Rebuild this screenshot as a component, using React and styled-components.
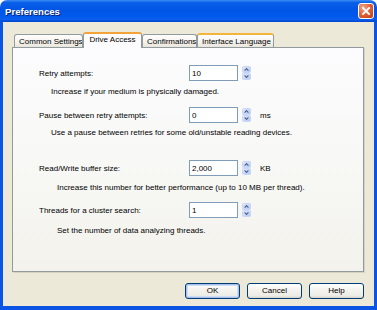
import React from 'react';
import styled, { createGlobalStyle, css } from 'styled-components';

const GlobalStyle = createGlobalStyle`
  html, body { margin: 0; padding: 0; background: #fff; }
  * { box-sizing: border-box; }
`;

const Window = styled.div`
  width: 377px;
  height: 310px;
  display: flex;
  flex-direction: column;
  font-family: "Liberation Sans", Arial, sans-serif;
  font-size: 8px;
  line-height: 12px;
  color: #000;
`;

const TitleBar = styled.div`
  height: 22px;
  flex: none;
  display: flex;
  align-items: center;
  justify-content: space-between;
  padding: 0 3px 0 5px;
  border-radius: 7px 7px 0 0;
  background: linear-gradient(180deg, #3b8cf5 0%, #0a5fe8 12%, #0055e5 45%, #0259ec 75%, #0b5fef 88%, #0044cc 100%);
`;

const Title = styled.div`
  padding-top: 2px;
  color: #fff;
  font-weight: bold;
  font-size: 9.6px;
  text-shadow: 1px 1px 0 #0a1f6e;
`;

const CloseButton = styled.div`
  width: 16px;
  height: 16px;
  border: 1px solid #fff;
  border-radius: 3px;
  display: flex;
  align-items: center;
  justify-content: center;
  background: radial-gradient(circle at 30% 25%, #f0a78a 0%, #e2643c 45%, #c13b15 100%);
`;

const Frame = styled.div`
  flex: 1;
  display: flex;
  flex-direction: column;
  background: #ece9d8;
  border-style: solid;
  border-color: #0a55e3;
  border-width: 0 3px 4px 3px;
  padding: 10px 10px 7px 9px;
`;

const TabStrip = styled.div`
  height: 15px;
  display: flex;
  align-items: flex-end;
  padding-left: 2px;
  position: relative;
  z-index: 1;
`;

const Tab = styled.div`
  width: ${p => p.$width}px;
  height: 13px;
  padding: 1px 4px 0;
  text-align: center;
  white-space: nowrap;
  overflow: hidden;
  line-height: 11px;
  border: 1px solid #919b9c;
  border-bottom: none;
  border-radius: 3px 3px 0 0;
  background: linear-gradient(180deg, #fefefe 0%, #f4f3ee 60%, #e8e6dc 100%);
  ${p => p.$hot && css`
    height: 14px;
    border-top: 2px solid #f5b53c;
    box-shadow: inset 0 0 0 0 transparent;
  `}
  ${p => p.$active && css`
    height: 16px;
    margin-bottom: -1px;
    padding-top: 0;
    border-top: 2px solid #f2a33a;
    background: #fcfcfe;
  `}
`;

const Panel = styled.div`
  height: 225px;
  border: 1px solid #919b9c;
  box-shadow: 1px 1px 0 #d6d3c6;
  background: linear-gradient(180deg, #fcfcfe 0%, #f7f7f4 60%, #f3f2ec 100%);
  padding: 17px 0 0 26px;
  display: flex;
  flex-direction: column;
`;

const Setting = styled.div`
  margin-top: ${p => p.$top}px;
  display: flex;
  flex-direction: column;
`;

const Row = styled.div`
  height: 16px;
  display: flex;
  align-items: center;
`;

const Label = styled.div`
  width: 150px;
  padding-top: 1px;
`;

const Field = styled.input`
  width: 49px;
  height: 16px;
  margin: 0;
  padding: 0 2px;
  border: 1px solid #7f9db9;
  background: #fff;
  font: inherit;
  color: #000;
  outline: none;
`;

const Spin = styled.svg`
  margin-left: 4px;
  flex: none;
`;

const Unit = styled.div`
  margin-left: 9px;
  padding-top: 1px;
`;

const Desc = styled.div`
  margin-top: ${p => p.$gap}px;
  padding-left: ${p => p.$indent}px;
`;

const Footer = styled.div`
  margin-top: 11px;
  display: flex;
  justify-content: flex-end;
  gap: 7px;
`;

const Button = styled.button`
  width: 55px;
  height: 16px;
  margin: 0;
  padding: 0;
  font: inherit;
  color: #000;
  border: 1px solid #003c74;
  border-radius: 3px;
  background: linear-gradient(180deg, #ffffff 0%, #f5f4ef 40%, #ecebe6 85%, #d6d0c5 100%);
  ${p => p.$default && css`
    box-shadow: inset 0 0 0 1px #a8c0ec, inset 0 0 0 2px #cedcf7;
  `}
`;

const Spinner = () => (
  <Spin width="9" height="16" viewBox="0 0 9 16">
    <defs>
      <linearGradient id="spg" x1="0" y1="0" x2="1" y2="1">
        <stop offset="0" stopColor="#e4ecfe" />
        <stop offset="1" stopColor="#b3c7f3" />
      </linearGradient>
    </defs>
    <rect x="0.5" y="1.5" width="8" height="6" rx="1" fill="url(#spg)" stroke="#c8d6f8" />
    <rect x="0.5" y="8.5" width="8" height="6" rx="1" fill="url(#spg)" stroke="#c8d6f8" />
    <path d="M2.6 5.6 L4.5 3.7 L6.4 5.6" stroke="#4d6185" strokeWidth="1.2" fill="none" />
    <path d="M2.6 10.4 L4.5 12.3 L6.4 10.4" stroke="#4d6185" strokeWidth="1.2" fill="none" />
  </Spin>
);

const tabs = [
  { name: 'Common Settings', width: 69 },
  { name: 'Drive Access', width: 59, active: true },
  { name: 'Confirmations', width: 55 },
  { name: 'Interface Language', width: 77, hot: true },
];

const settings = [
  { label: 'Retry attempts:', value: '10', desc: 'Increase if your medium is physically damaged.', indent: 12, gap: 5, top: 0 },
  { label: 'Pause between retry attempts:', value: '0', unit: 'ms', desc: 'Use a pause between retries for some old/unstable reading devices.', indent: 12, gap: 4, top: 9 },
  { label: 'Read/Write buffer size:', value: '2,000', unit: 'KB', desc: 'Increase this number for better performance (up to 10 MB per thread).', indent: 18, gap: 6, top: 21 },
  { label: 'Threads for a cluster search:', value: '1', desc: 'Set the number of data analyzing threads.', indent: 18, gap: 7, top: 8 },
];

export default function App() {
  return (
    <>
      <GlobalStyle />
      <Window>
        <TitleBar>
          <Title>Preferences</Title>
          <CloseButton>
            <svg width="10" height="10" viewBox="0 0 10 10">
              <path d="M2 2 L8 8 M8 2 L2 8" stroke="#fff" strokeWidth="1.8" strokeLinecap="square" />
            </svg>
          </CloseButton>
        </TitleBar>
        <Frame>
          <TabStrip>
            {tabs.map(t => (
              <Tab key={t.name} $width={t.width} $active={t.active} $hot={t.hot}>{t.name}</Tab>
            ))}
          </TabStrip>
          <Panel>
            {settings.map(s => (
              <Setting key={s.label} $top={s.top}>
                <Row>
                  <Label>{s.label}</Label>
                  <Field readOnly value={s.value} />
                  <Spinner />
                  {s.unit && <Unit>{s.unit}</Unit>}
                </Row>
                <Desc $gap={s.gap} $indent={s.indent}>{s.desc}</Desc>
              </Setting>
            ))}
          </Panel>
          <Footer>
            <Button $default>OK</Button>
            <Button>Cancel</Button>
            <Button>Help</Button>
          </Footer>
        </Frame>
      </Window>
    </>
  );
}
